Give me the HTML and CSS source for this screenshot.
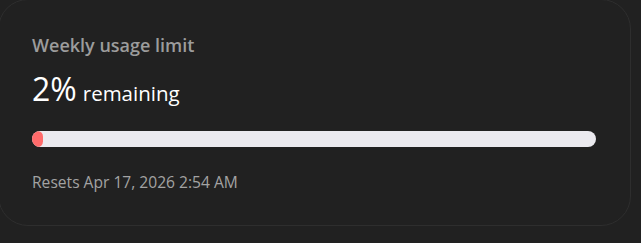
FILE: index.html
```html
<!DOCTYPE html>
<html>
<head>
<meta charset="utf-8">
<link rel="stylesheet" href="styles.css">
</head>
<body>
<div class="card">
  <div class="title">Weekly usage limit</div>
  <div class="value"><span class="pct">2%</span> <span class="rem">remaining</span></div>
  <div class="bar"><div class="fill" style="width: 2%"></div></div>
  <div class="reset">Resets Apr 17, 2026 2:54 AM</div>
</div>
</body>
</html>
```

FILE: styles.css
```css
html, body {
  margin: 0;
  padding: 0;
  background: #212121;
  font-family: "Open Sans", "Noto Sans", sans-serif;
}
body {
  width: 641px;
  height: 243px;
  overflow: hidden;
}
.card {
  box-sizing: border-box;
  margin: -1px 0 0 -2px;
  width: 633px;
  height: 227px;
  border: 1px solid #2e2e2e;
  border-radius: 30px;
  background: #212121;
  padding: 33px 33px 0 33px;
  display: flex;
  flex-direction: column;
}
.title {
  color: #9c9c9c;
  font-size: 18px;
  font-weight: 600;
  line-height: 24px;
}
.value {
  color: #ffffff;
  margin-top: 12px;
  line-height: 40px;
  display: flex;
  align-items: baseline;
  gap: 6px;
}
.pct {
  font-size: 32px;
}
.rem {
  font-size: 20.5px;
}
.bar {
  margin-top: 18px;
  height: 16px;
  width: 564px;
  border-radius: 8px;
  background: #ebeaef;
  overflow: hidden;
}
.fill {
  height: 100%;
  background: #ff6b6b;
  border-radius: 8px;
  min-width: 11px;
}
.reset {
  margin-top: 25px;
  color: #a3a3a3;
  font-size: 15.6px;
  line-height: 20px;
}
```
